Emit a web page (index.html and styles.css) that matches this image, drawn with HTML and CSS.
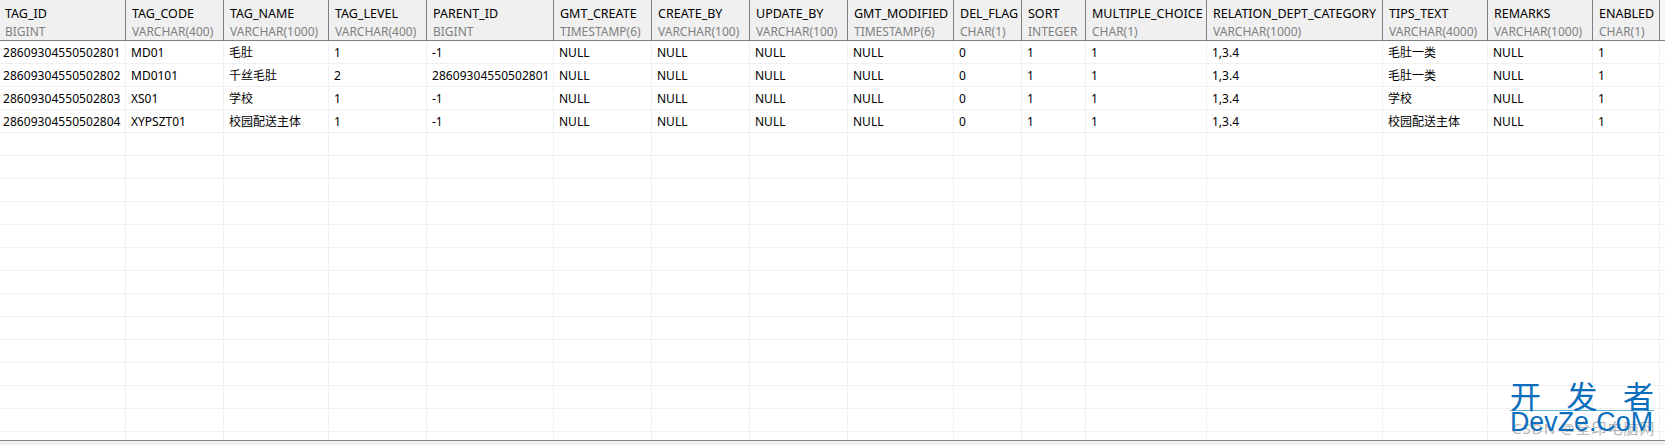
FILE: index.html
```html
<!DOCTYPE html>
<html lang="zh">
<head>
<meta charset="utf-8">
<title>Query result</title>
<link rel="stylesheet" href="styles.css">
</head>
<body>
<div class="app">
  <div class="grid">
    <table class="result">
      <colgroup>
        <col class="c126"><col class="c98"><col class="c105"><col class="c98"><col class="c127"><col class="c98"><col class="c98"><col class="c98"><col class="c106"><col class="c68"><col class="c64"><col class="c121"><col class="c176"><col class="c105"><col class="c105"><col class="c67"><col>
      </colgroup>
      <thead>
        <tr>
          <th><b>TAG_ID</b><i>BIGINT</i></th>
          <th><b>TAG_CODE</b><i>VARCHAR(400)</i></th>
          <th><b>TAG_NAME</b><i>VARCHAR(1000)</i></th>
          <th><b>TAG_LEVEL</b><i>VARCHAR(400)</i></th>
          <th><b>PARENT_ID</b><i>BIGINT</i></th>
          <th><b>GMT_CREATE</b><i>TIMESTAMP(6)</i></th>
          <th><b>CREATE_BY</b><i>VARCHAR(100)</i></th>
          <th><b>UPDATE_BY</b><i>VARCHAR(100)</i></th>
          <th><b>GMT_MODIFIED</b><i>TIMESTAMP(6)</i></th>
          <th><b>DEL_FLAG</b><i>CHAR(1)</i></th>
          <th><b>SORT</b><i>INTEGER</i></th>
          <th><b>MULTIPLE_CHOICE</b><i>CHAR(1)</i></th>
          <th><b>RELATION_DEPT_CATEGORY</b><i>VARCHAR(1000)</i></th>
          <th><b>TIPS_TEXT</b><i>VARCHAR(4000)</i></th>
          <th><b>REMARKS</b><i>VARCHAR(1000)</i></th>
          <th><b>ENABLED</b><i>CHAR(1)</i></th>
          <th class="filler"></th>
        </tr>
      </thead>
      <tbody>
        <tr><td class="id">28609304550502801</td><td>MD01</td><td>毛肚</td><td>1</td><td>-1</td><td>NULL</td><td>NULL</td><td>NULL</td><td>NULL</td><td>0</td><td>1</td><td>1</td><td>1,3.4</td><td>毛肚一类</td><td>NULL</td><td>1</td><td></td></tr>
        <tr><td class="id">28609304550502802</td><td>MD0101</td><td>千丝毛肚</td><td>2</td><td class="id">28609304550502801</td><td>NULL</td><td>NULL</td><td>NULL</td><td>NULL</td><td>0</td><td>1</td><td>1</td><td>1,3.4</td><td>毛肚一类</td><td>NULL</td><td>1</td><td></td></tr>
        <tr><td class="id">28609304550502803</td><td>XS01</td><td>学校</td><td>1</td><td>-1</td><td>NULL</td><td>NULL</td><td>NULL</td><td>NULL</td><td>0</td><td>1</td><td>1</td><td>1,3.4</td><td>学校</td><td>NULL</td><td>1</td><td></td></tr>
        <tr><td class="id">28609304550502804</td><td>XYPSZT01</td><td>校园配送主体</td><td>1</td><td>-1</td><td>NULL</td><td>NULL</td><td>NULL</td><td>NULL</td><td>0</td><td>1</td><td>1</td><td>1,3.4</td><td>校园配送主体</td><td>NULL</td><td>1</td><td></td></tr>
        <tr><td></td><td></td><td></td><td></td><td></td><td></td><td></td><td></td><td></td><td></td><td></td><td></td><td></td><td></td><td></td><td></td><td></td></tr>
        <tr><td></td><td></td><td></td><td></td><td></td><td></td><td></td><td></td><td></td><td></td><td></td><td></td><td></td><td></td><td></td><td></td><td></td></tr>
        <tr><td></td><td></td><td></td><td></td><td></td><td></td><td></td><td></td><td></td><td></td><td></td><td></td><td></td><td></td><td></td><td></td><td></td></tr>
        <tr><td></td><td></td><td></td><td></td><td></td><td></td><td></td><td></td><td></td><td></td><td></td><td></td><td></td><td></td><td></td><td></td><td></td></tr>
        <tr><td></td><td></td><td></td><td></td><td></td><td></td><td></td><td></td><td></td><td></td><td></td><td></td><td></td><td></td><td></td><td></td><td></td></tr>
        <tr><td></td><td></td><td></td><td></td><td></td><td></td><td></td><td></td><td></td><td></td><td></td><td></td><td></td><td></td><td></td><td></td><td></td></tr>
        <tr><td></td><td></td><td></td><td></td><td></td><td></td><td></td><td></td><td></td><td></td><td></td><td></td><td></td><td></td><td></td><td></td><td></td></tr>
        <tr><td></td><td></td><td></td><td></td><td></td><td></td><td></td><td></td><td></td><td></td><td></td><td></td><td></td><td></td><td></td><td></td><td></td></tr>
        <tr><td></td><td></td><td></td><td></td><td></td><td></td><td></td><td></td><td></td><td></td><td></td><td></td><td></td><td></td><td></td><td></td><td></td></tr>
        <tr><td></td><td></td><td></td><td></td><td></td><td></td><td></td><td></td><td></td><td></td><td></td><td></td><td></td><td></td><td></td><td></td><td></td></tr>
        <tr><td></td><td></td><td></td><td></td><td></td><td></td><td></td><td></td><td></td><td></td><td></td><td></td><td></td><td></td><td></td><td></td><td></td></tr>
        <tr><td></td><td></td><td></td><td></td><td></td><td></td><td></td><td></td><td></td><td></td><td></td><td></td><td></td><td></td><td></td><td></td><td></td></tr>
        <tr><td></td><td></td><td></td><td></td><td></td><td></td><td></td><td></td><td></td><td></td><td></td><td></td><td></td><td></td><td></td><td></td><td></td></tr>
        <tr><td></td><td></td><td></td><td></td><td></td><td></td><td></td><td></td><td></td><td></td><td></td><td></td><td></td><td></td><td></td><td></td><td></td></tr>
      </tbody>
    </table>
  </div>
  <div class="status"></div>
  <div class="mark">
    <div class="mark-under">CSDN @全印电脑网</div>
    <div class="mark-cn"><span>开</span><span>发</span><span>者</span></div>
    <div class="mark-en">DevZe.CoM</div>
  </div>
</div>
</body>
</html>
```
FILE: styles.css
```css
* { box-sizing: border-box; }
html, body { margin: 0; padding: 0; }
body {
  background: #fff;
  color: #000;
  font-family: "Noto Sans", "Noto Sans CJK SC", sans-serif;
  font-size: 12px;
}
.app {
  position: relative;
  display: flex;
  flex-direction: column;
  width: 1665px;
  height: 445px;
  overflow: hidden;
}
.grid { flex: 1; min-height: 0; overflow: hidden; }
.status {
  flex: 0 0 5px;
  background: #f0f0f0;
  border-top: 1px solid #8a8a8a;
}
.result {
  table-layout: fixed;
  border-collapse: separate;
  border-spacing: 0;
  width: 1665px;
}
.c126 { width: 126px; }
.c98 { width: 98px; }
.c105 { width: 105px; }
.c127 { width: 127px; }
.c106 { width: 106px; }
.c68 { width: 68px; }
.c64 { width: 64px; }
.c121 { width: 121px; }
.c176 { width: 176px; }
.c67 { width: 67px; }
th {
  height: 41px;
  padding: 5px 0 0 6px;
  background: #f0f0f0;
  border-right: 1px solid #808080;
  border-bottom: 1px solid #808080;
  font-weight: 400;
  text-align: left;
  vertical-align: top;
  white-space: nowrap;
  overflow: hidden;
}
th:first-child { padding-left: 5px; }
th.filler { border-right: 0; padding: 0; background: #f7f7f7; }
th b, th i {
  display: block;
  font-weight: 400;
  font-style: normal;
}
th b { font-size: 12.5px; line-height: 18px; }
th i { color: #808080; line-height: 17px; }
td {
  height: 23px;
  padding: 1px 0 0 5px;
  border-right: 1px solid #f0f0f0;
  border-bottom: 1px solid #f0f0f0;
  line-height: 21px;
  white-space: nowrap;
  overflow: hidden;
}
td:first-child { padding-left: 3px; }
td:last-child { border-right: 0; padding: 0; }
td.id { letter-spacing: 0.05px; }
.mark {
  position: absolute;
  left: 1510px;
  top: 379px;
  width: 144px;
  height: 60px;
}
.mark-cn {
  position: relative;
  display: flex;
  justify-content: space-between;
  height: 32px;
  border-bottom: 1px solid #5aaee0;
  color: #0a6ebd;
  font-family: "Noto Sans CJK SC", sans-serif;
  font-size: 31px;
  line-height: 32px;
}
.mark-en {
  position: relative;
  margin-top: -2px;
  color: #0a6ebd;
  font-family: "Liberation Sans", sans-serif;
  font-size: 26.8px;
  line-height: 26px;
  white-space: nowrap;
}
.mark-under {
  position: absolute;
  left: 2px;
  top: 41px;
  width: 140px;
  color: #b5b5b5;
  font-size: 15px;
  line-height: 16px;
  white-space: nowrap;
  letter-spacing: 1px;
}
```
